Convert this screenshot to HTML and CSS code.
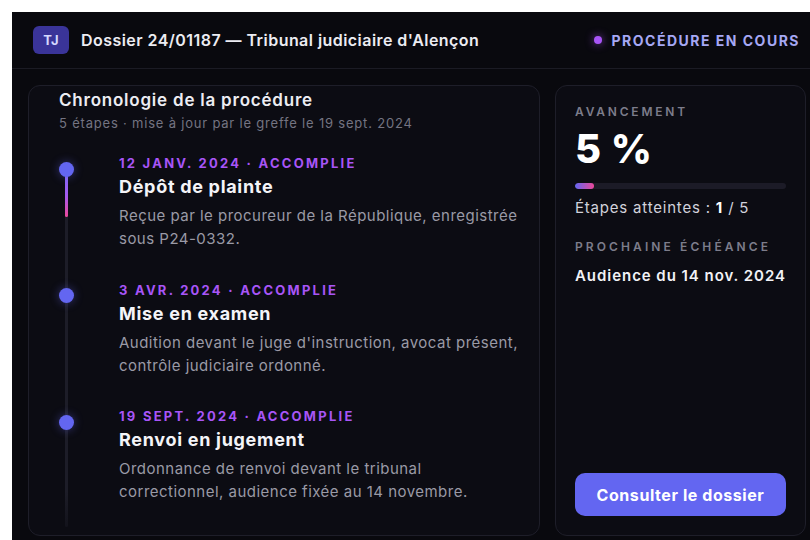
FILE: index.html
```html
<!DOCTYPE html>
<html lang="fr">
<head>
<meta charset="utf-8">
<title>Dossier 24/01187</title>
<link rel="stylesheet" href="styles.css">
</head>
<body>
<div class="app">
  <header class="header">
    <div class="brand">
      <span class="badge">TJ</span>
      <h1 class="title">Dossier 24/01187 — Tribunal judiciaire d'Alençon</h1>
    </div>
    <div class="status"><span class="status-dot"></span>PROCÉDURE EN COURS</div>
  </header>
  <main class="main">
    <section class="card timeline-card">
      <h2 class="card-title">Chronologie de la procédure</h2>
      <p class="card-sub">5 étapes · mise à jour par le greffe le 19 sept. 2024</p>
      <ol class="timeline">
        <li class="step">
          <span class="dot"></span>
          <div class="step-date">12 JANV. 2024 · ACCOMPLIE</div>
          <div class="step-title">Dépôt de plainte</div>
          <p class="step-desc">Reçue par le procureur de la République, enregistrée sous P24-0332.</p>
        </li>
        <li class="step">
          <span class="dot"></span>
          <div class="step-date">3 AVR. 2024 · ACCOMPLIE</div>
          <div class="step-title">Mise en examen</div>
          <p class="step-desc">Audition devant le juge d'instruction, avocat présent, contrôle judiciaire ordonné.</p>
        </li>
        <li class="step">
          <span class="dot"></span>
          <div class="step-date">19 SEPT. 2024 · ACCOMPLIE</div>
          <div class="step-title">Renvoi en jugement</div>
          <p class="step-desc">Ordonnance de renvoi devant le tribunal correctionnel, audience fixée au 14 novembre.</p>
        </li>
      </ol>
    </section>
    <aside class="card side-card">
      <div class="label">AVANCEMENT</div>
      <div class="percent">5 %</div>
      <div class="bar"><div class="bar-fill" style="width: 9%"></div></div>
      <div class="steps-count">Étapes atteintes : <strong>1</strong> / 5</div>
      <div class="label label-next">PROCHAINE ÉCHÉANCE</div>
      <div class="next">Audience du 14 nov. 2024</div>
      <button class="btn">Consulter le dossier</button>
    </aside>
  </main>
</div>
</body>
</html>
```
FILE: styles.css
```css
html, body {
  margin: 0;
  padding: 0;
  background: #ffffff;
  overflow: hidden;
}
body {
  padding: 12px 0 0 12px;
  font-family: Inter, "Noto Sans", "DejaVu Sans", sans-serif;
}
.app {
  width: 810px;
  height: 540px;
  background: #09090e;
  display: flex;
  flex-direction: column;
  color: #ececf2;
}
.header {
  height: 56px;
  flex: 0 0 auto;
  display: flex;
  align-items: center;
  justify-content: space-between;
  padding: 0 22px 0 21px;
  border-bottom: 1px solid #1b1b24;
}
.brand {
  display: flex;
  align-items: center;
  gap: 12px;
}
.badge {
  width: 36px;
  height: 28px;
  border-radius: 6px;
  background: #3a3499;
  color: #d6d8ff;
  font-size: 13px;
  font-weight: 700;
  letter-spacing: 0.3px;
  display: flex;
  align-items: center;
  justify-content: center;
}
.title {
  margin: 0;
  font-size: 16px;
  font-weight: 600;
  letter-spacing: 0.45px;
  color: #ececf2;
}
.status {
  display: flex;
  align-items: center;
  gap: 9px;
  font-size: 14px;
  font-weight: 700;
  letter-spacing: 1.5px;
  color: #a6a8f4;
}
.status-dot {
  width: 8px;
  height: 8px;
  border-radius: 50%;
  background: #a855f7;
  box-shadow: 0 0 8px rgba(168, 85, 247, 0.7);
}
.main {
  flex: 1;
  display: grid;
  grid-template-columns: 512px 251px;
  gap: 15px;
  padding: 16px;
}
.card {
  background: #0c0c13;
  border: 1px solid #1e1e29;
  border-radius: 12px;
  display: flex;
  flex-direction: column;
}
.timeline-card {
  padding: 4px 16px 0 30px;
}
.card-title {
  margin: 0;
  font-size: 17px;
  line-height: 20px;
  font-weight: 600;
  letter-spacing: 0.78px;
  color: #ececf2;
}
.card-sub {
  margin: 4px 0 0;
  font-size: 13px;
  line-height: 18px;
  letter-spacing: 0.8px;
  color: #747482;
}
.timeline {
  list-style: none;
  margin: 23px 0 0;
  padding: 0;
  flex: 1;
  position: relative;
  display: flex;
  flex-direction: column;
  gap: 31.5px;
}
.timeline::before {
  content: "";
  position: absolute;
  left: 6px;
  top: 14px;
  bottom: 8px;
  width: 3px;
  background: linear-gradient(#1d1d28, #1d1d28 90%, rgba(29, 29, 40, 0.4));
  border-radius: 2px;
}
.timeline::after {
  content: "";
  position: absolute;
  left: 6px;
  top: 14px;
  height: 48px;
  width: 3px;
  background: linear-gradient(#7c6cf5, #a45af0 55%, #ec4899);
  border-radius: 2px;
}
.step {
  position: relative;
  padding-left: 60px;
}
.dot {
  position: absolute;
  left: 0;
  top: 6.5px;
  width: 15px;
  height: 15px;
  border-radius: 50%;
  background: #6366f1;
  box-shadow: 0 0 10px rgba(99, 102, 241, 0.45);
  z-index: 1;
}
.step-date {
  font-size: 13px;
  line-height: 17px;
  font-weight: 700;
  letter-spacing: 2.25px;
  color: #a855f7;
}
.step-title {
  margin-top: 3px;
  font-size: 18px;
  line-height: 24px;
  font-weight: 700;
  letter-spacing: 0.7px;
  color: #f4f4f8;
}
.step-desc {
  margin: 5px 0 0;
  font-size: 15px;
  line-height: 23px;
  letter-spacing: 0.48px;
  color: #9a9aa6;
}
.side-card {
  padding: 18px 19px 19px;
}
.label {
  font-size: 12px;
  line-height: 16px;
  font-weight: 600;
  letter-spacing: 2.8px;
  color: #7d7d8b;
}
.percent {
  margin-top: 7px;
  font-size: 40px;
  line-height: 44px;
  font-weight: 800;
  letter-spacing: 0.5px;
  color: #ffffff;
}
.bar {
  margin-top: 12px;
  height: 6px;
  border-radius: 3px;
  background: #1c1b27;
  overflow: hidden;
}
.bar-fill {
  height: 100%;
  border-radius: 3px;
  background: linear-gradient(90deg, #6366f1, #ec4899);
}
.steps-count {
  margin-top: 8px;
  font-size: 15px;
  line-height: 22px;
  letter-spacing: 0.8px;
  color: #d2d2dc;
}
.steps-count strong {
  color: #ffffff;
  font-weight: 700;
}
.label-next {
  margin-top: 20px;
  letter-spacing: 3.1px;
}
.next {
  margin-top: 10px;
  font-size: 15px;
  line-height: 22px;
  font-weight: 600;
  letter-spacing: 0.95px;
  color: #f2f2f6;
}
.btn {
  margin-top: auto;
  height: 43px;
  border: none;
  border-radius: 10px;
  background: #6366f1;
  color: #ffffff;
  font-family: inherit;
  font-size: 16px;
  font-weight: 700;
  letter-spacing: 0.57px;
  cursor: pointer;
}
```
